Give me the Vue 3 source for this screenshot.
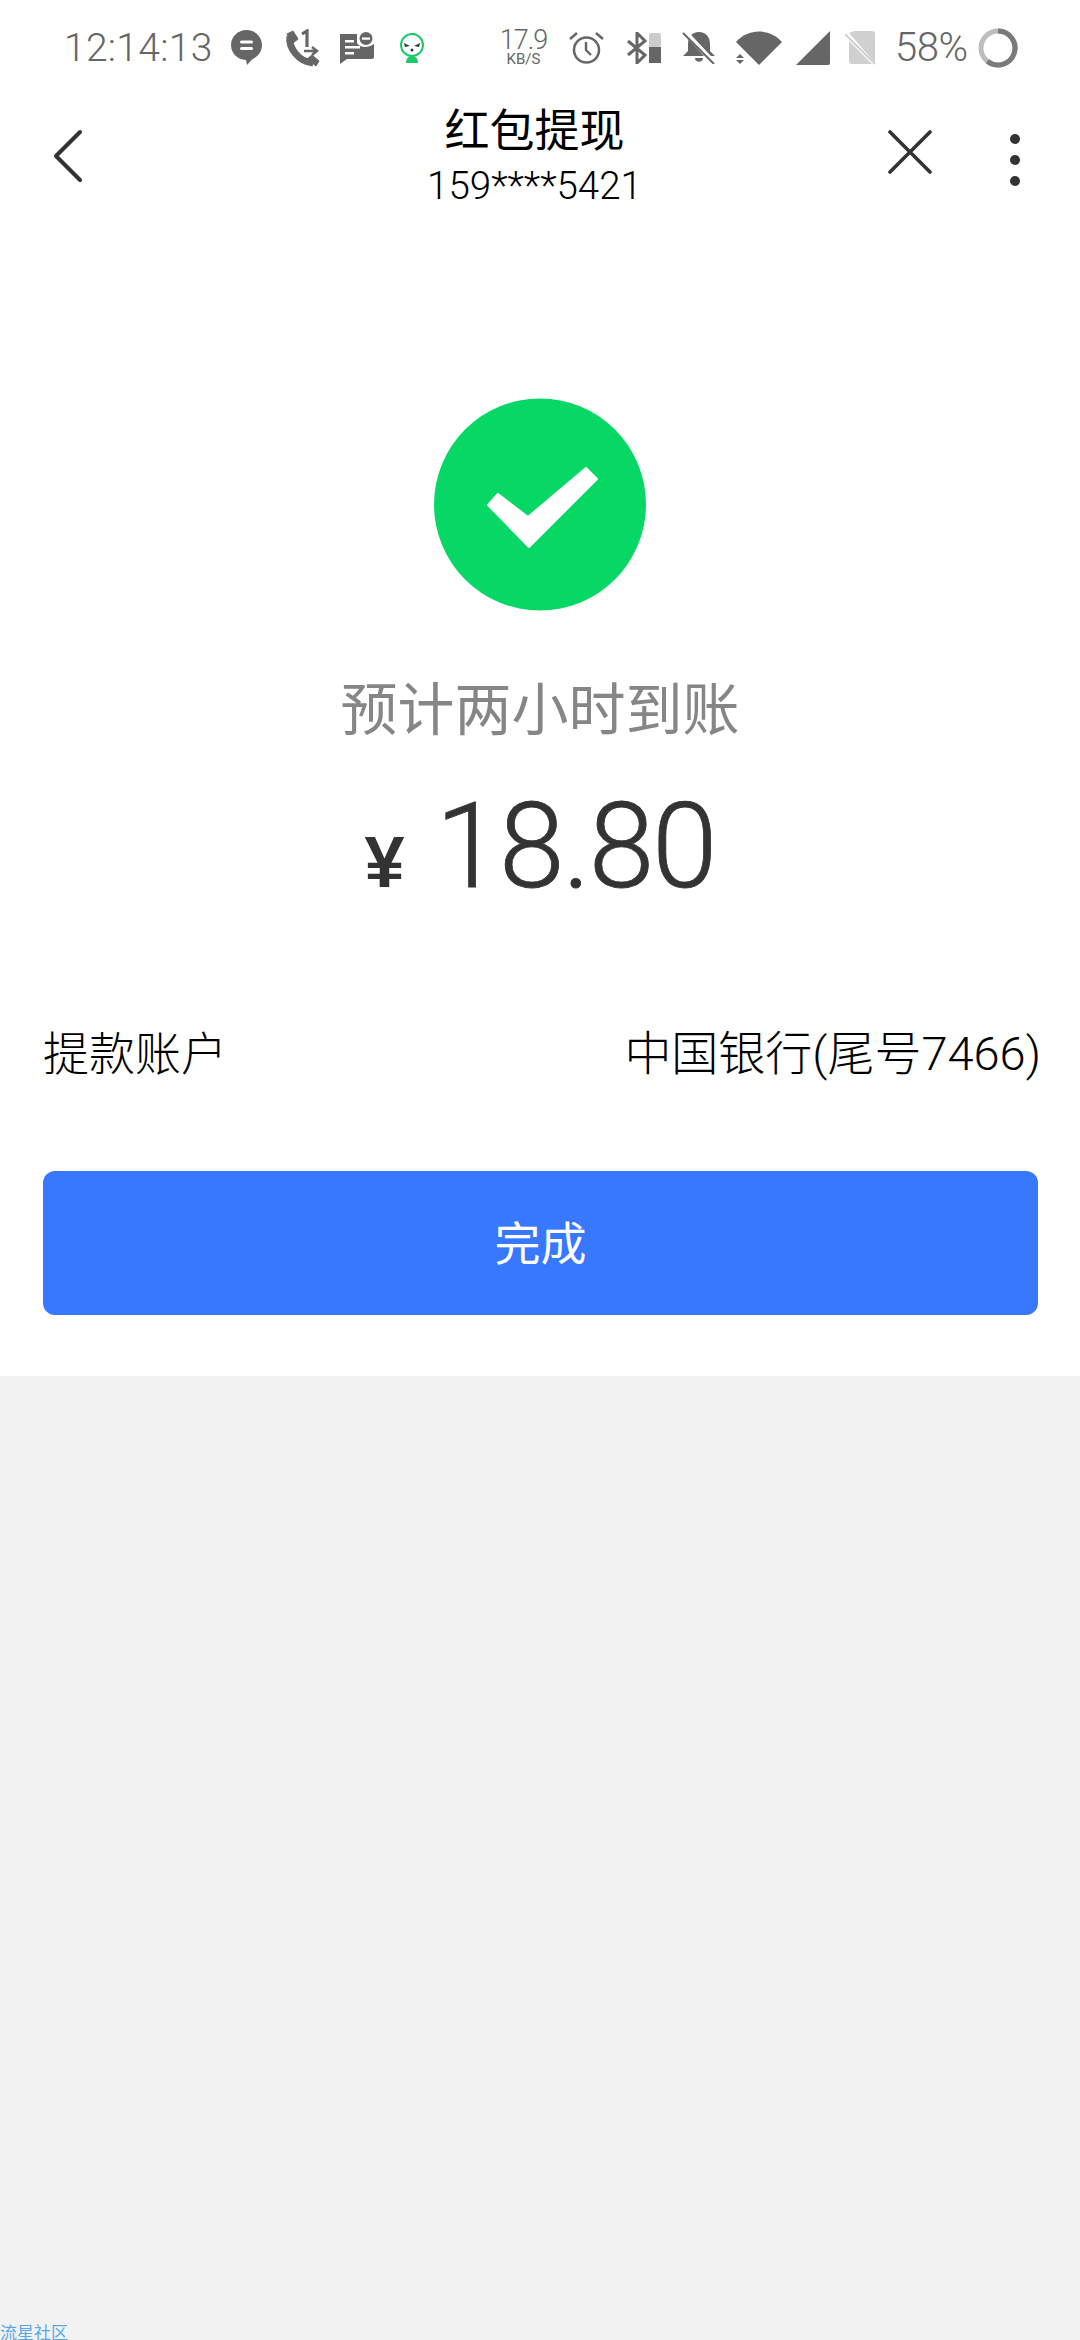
<template>
  <div class="page">
    <div class="sheet">
      <div class="status">
        <span class="time">12:14:13</span>
        <svg class="ic-chat" viewBox="0 0 31 35"><path d="M15.5 0C24 0 31 6.700 31 15c0 7-4.500 12-10 14.500L16 35l-1-5C6.500 29.500 0 23.500 0 15 0 6.700 7 0 15.500 0z" fill="#666"/><rect x="9" y="10.500" width="13" height="3" rx="1.500" fill="#fff"/><rect x="9" y="17" width="13" height="3" rx="1.500" fill="#fff"/></svg>
        <svg class="ic-phone" viewBox="0 0 36 38"><path d="M6 7C4 19 15 33 29 34" fill="none" stroke="#666" stroke-width="7"/><path d="M3 5l6-3 5 8-5 4zM23 30l5-4 7 6-3 5z" fill="#666" stroke="#666" stroke-linejoin="round"/><path d="M18 5l5-3v16" fill="none" stroke="#666" stroke-width="3.200"/><path d="M20 22h12M28 18l5 4-5 4" fill="none" stroke="#666" stroke-width="2.400"/></svg>
        <svg class="ic-msg" viewBox="0 0 34 32"><path d="M0 2h17v9c3 5 11 5 17 1v13c0 1-1 2-2 2H7l-7 5z" fill="#666"/><rect x="5" y="8" width="9" height="2.500" fill="#fff"/><rect x="5" y="14" width="15" height="2.500" fill="#fff"/><rect x="5" y="20" width="9" height="2.500" fill="#fff"/><circle cx="26" cy="6.500" r="6.500" fill="#666"/><rect x="22" y="5.500" width="8" height="2.200" fill="#fff"/></svg>
        <svg class="ic-bot" viewBox="0 0 26 30"><circle cx="13" cy="12" r="11" fill="#fff" stroke="#1ec96a" stroke-width="2"/><path d="M13 1c1-1 2-1 3 0" fill="none" stroke="#1ec96a" stroke-width="2"/><path d="M5 10l6 3-5 1zM21 10l-6 3 5 1z" fill="#333"/><circle cx="13" cy="17" r="1.500" fill="#333"/><path d="M7 30c0-4 2-7 6-7s6 3 6 7z" fill="#1ec96a"/></svg>
        <div class="speed"><span class="speed-num">17.9</span><span class="speed-unit">KB/S</span></div>
        <svg class="ic-alarm" viewBox="0 0 35 34"><circle cx="17.500" cy="19" r="12.500" fill="none" stroke="#666" stroke-width="2.500"/><path d="M17 11v8l5 5" fill="none" stroke="#666" stroke-width="2.400"/><path d="M1 8l7-6M34 8l-7-6" fill="none" stroke="#666" stroke-width="2.400"/></svg>
        <svg class="ic-bt" viewBox="0 0 36 32"><path d="M2 9l17 14-8 8V1l8 8L2 23" fill="none" stroke="#666" stroke-width="3"/><rect x="23" y="1" width="12" height="14" rx="2" fill="#ccc"/><rect x="23" y="15" width="12" height="16" fill="#666"/></svg>
        <svg class="ic-bell" viewBox="0 0 34 33"><path d="M17 1c7 0 11 5 11 12v7l5 5H1l5-5v-7C6 6 10 1 17 1z" fill="#666"/><path d="M13 27h8c0 5-8 5-8 0z" fill="#666"/><path d="M2 0l30 32" stroke="#fff" stroke-width="5"/><path d="M1 2l31 31" stroke="#666" stroke-width="2"/></svg>
        <svg class="ic-wifi" viewBox="0 0 46 34"><path d="M0 11C12-3 34-3 46 11L23 34z" fill="#666"/><path d="M0 27l4-4 4 4zM0 29l4 4 4-4z" fill="#666"/></svg>
        <svg class="ic-signal" viewBox="0 0 34 34"><path d="M34 0v32a2 2 0 0 1-2 2H0z" fill="#666"/></svg>
        <svg class="ic-sim" viewBox="0 0 31 34"><path d="M9 0h18a3 3 0 0 1 3 3v29L4 2zM4 10l23 23H7a3 3 0 0 1-3-3z" fill="#d0d0d0"/><path d="M0 3l30 30" stroke="#d0d0d0" stroke-width="2"/></svg>
        <span class="battery">58%</span>
        <svg class="ic-ring" viewBox="0 0 40 40"><circle cx="20" cy="20" r="17" fill="none" stroke="#bdbdbd" stroke-width="5"/><path d="M20 3A17 17 0 1 1 9.400 33.300" fill="none" stroke="#7a7a7a" stroke-width="5"/></svg>
      </div>

      <div class="nav">
        <div class="nav-left">
          <svg class="ic-back" viewBox="0 0 30 54"><path d="M27 3L3 27l24 24" fill="none" stroke="#333" stroke-width="4" stroke-linecap="round" stroke-linejoin="round"/></svg>
        </div>
        <div class="nav-title">
          <div class="title">红包提现</div>
          <div class="phone">159****5421</div>
        </div>
        <div class="nav-right">
          <svg class="ic-close" viewBox="0 0 44 44"><path d="M2 2l40 40M42 2L2 42" fill="none" stroke="#333" stroke-width="3.600" stroke-linecap="round"/></svg>
          <div class="dots"><i></i><i></i><i></i></div>
        </div>
      </div>

      <div class="result">
        <svg class="ic-ok" viewBox="0 0 212 213"><circle cx="106" cy="106.500" r="106" fill="#07d765"/><path d="M64 96l-10 11 41 42 68-68-11-11-58 49z" fill="#fff" stroke="#fff" stroke-width="2" stroke-linejoin="round"/></svg>
        <div class="hint">预计两小时到账</div>
        <div class="amount"><span class="yen">¥</span><span class="num">18.80</span></div>
      </div>

      <div class="row">
        <span>提款账户</span>
        <span class="row-value">中国银行(尾号7466)</span>
      </div>

      <div class="btn">完成</div>
    </div>
    <div class="rest"></div>
    <span class="mark">流星社区</span>
  </div>
</template>

<script setup>
</script>

<style scoped>
.page {
  position: relative;
  display: flex;
  flex-direction: column;
  width: 1080px;
  height: 2340px;
  overflow: hidden;
  background: #f2f2f2;
  font-family: "Noto Sans CJK SC", "Noto Sans", sans-serif;
}
.sheet {
  background: #fff;
  padding-bottom: 61px;
}
.rest {
  flex: 1;
}

.status {
  display: flex;
  align-items: center;
  height: 95px;
  padding-left: 64px;
  font-family: Roboto, "Liberation Sans", sans-serif;
  font-weight: 300;
  color: #666;
}
.status svg {
  display: block;
  flex: none;
}
.time {
  width: 143px;
  margin-right: 24px;
  font-size: 39px;
  letter-spacing: 0.3px;
  white-space: nowrap;
}
.ic-chat { width: 31px; height: 35px; margin-right: 22px; }
.ic-phone { width: 36px; height: 38px; margin-right: 20px; }
.ic-msg { width: 34px; height: 32px; margin-right: 25px; }
.ic-bot { width: 26px; height: 30px; margin-right: 76px; }
.speed {
  display: flex;
  flex-direction: column;
  align-items: center;
  width: 45px;
  margin-right: 23px;
}
.speed-num { font-size: 27px; line-height: 22px; letter-spacing: -1px; }
.speed-unit { font-size: 15px; line-height: 16px; font-weight: 400; }
.ic-alarm { width: 35px; height: 34px; margin-right: 22px; }
.ic-bt { width: 36px; height: 32px; margin-right: 20px; }
.ic-bell { width: 34px; height: 33px; margin-right: 20px; }
.ic-wifi { width: 46px; height: 34px; margin-right: 14px; }
.ic-signal { width: 34px; height: 34px; margin-right: 15px; }
.ic-sim { width: 31px; height: 34px; margin-right: 19px; }
.battery { width: 71px; margin-right: 12px; font-size: 40px; white-space: nowrap; letter-spacing: -0.5px; }
.ic-ring { width: 40px; height: 40px; }

.nav {
  display: flex;
  height: 115px;
}
.nav-left {
  width: 180px;
  padding: 34px 0 0 53px;
  box-sizing: border-box;
}
.ic-back { display: block; width: 30px; height: 54px; }
.nav-title {
  width: 709px;
  padding-top: 8px;
  text-align: center;
}
.title {
  font-size: 45px;
  line-height: 50px;
  color: #000;
}
.phone {
  margin-top: 13px;
  font-family: Roboto, "Liberation Sans", sans-serif;
  font-size: 38.5px;
  font-weight: 300;
  line-height: 40px;
  color: #000;
}
.nav-right {
  display: flex;
  flex: 1;
  padding-top: 35px;
}
.ic-close { display: block; width: 44px; height: 44px; margin-left: -1px; }
.dots {
  display: flex;
  flex-direction: column;
  gap: 11px;
  margin: 4px 0 0 78px;
}
.dots i {
  display: block;
  width: 10px;
  height: 10px;
  border-radius: 50%;
  background: #333;
}

.result {
  display: flex;
  flex-direction: column;
  align-items: center;
  padding-top: 188px;
}
.ic-ok { display: block; width: 212px; height: 213px; }
.hint {
  margin-top: 64px;
  font-size: 57px;
  line-height: 60px;
  color: #868686;
}
.amount {
  display: flex;
  align-items: baseline;
  height: 120px;
  margin-top: 52px;
  line-height: 120px;
  color: #333;
}
.yen {
  margin-right: 31px;
  font-family: "Liberation Sans", sans-serif;
  font-size: 72px;
  font-weight: 700;
}
.num {
  font-family: Roboto, sans-serif;
  font-size: 118px;
  font-weight: 300;
  letter-spacing: -2px;
  -webkit-text-stroke: 0.8px #333;
}

.row {
  display: flex;
  justify-content: space-between;
  align-items: baseline;
  height: 60px;
  margin-top: 117px;
  padding: 0 39px 0 43px;
  font-family: Roboto, "Noto Sans CJK SC", sans-serif;
  font-size: 46px;
  font-weight: 300;
  line-height: 60px;
  color: #000;
}
.row-value {
  font-size: 47px;
}

.btn {
  height: 144px;
  margin: 87px 42px 0 43px;
  border-radius: 12px;
  background: #3778ff;
  color: #fff;
  font-size: 46px;
  line-height: 138px;
  text-align: center;
}

.mark {
  position: absolute;
  left: 0;
  bottom: 0;
  font-size: 17px;
  line-height: 17px;
  color: #5aa9e6;
}
</style>

<style>
html, body {
  margin: 0;
  background: #f2f2f2;
}
</style>
